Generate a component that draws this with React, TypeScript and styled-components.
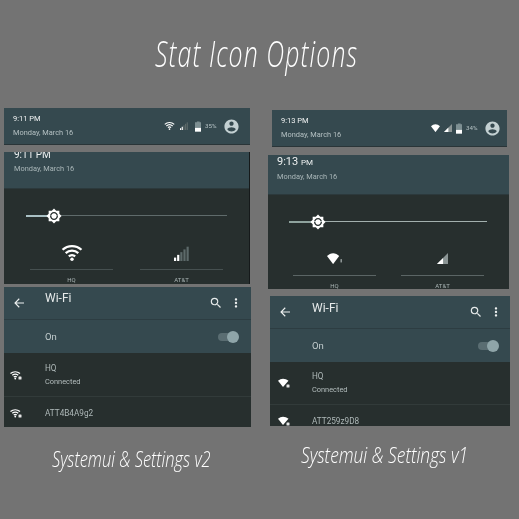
import React from 'react'
import styled, { createGlobalStyle } from 'styled-components'

const GlobalStyle = createGlobalStyle`
  html, body {
    margin: 0;
    padding: 0;
    background: #737373;
  }
  * {
    box-sizing: border-box;
  }
`

const Page = styled.div`
  width: 519px;
  height: 519px;
  overflow: hidden;
  background: #737373;
  font-family: Roboto, 'Liberation Sans', sans-serif;
  filter: blur(0.25px);
`

const Title = styled.h1`
  height: 100px;
  margin: 0;
  padding: 33px 0 0 155px;
  font-family: 'Open Sans', 'Liberation Sans', sans-serif;
  font-size: 36px;
  line-height: 42px;
  font-weight: 300;
  font-style: italic;
  letter-spacing: 1.6px;
  color: #fff;
  white-space: nowrap;

  span {
    display: inline-block;
    transform: scaleX(0.69);
    transform-origin: left center;
  }
`

const Columns = styled.div`
  display: flex;
`

const Column = styled.div`
  flex: 0 0 auto;
  width: ${p => (p.$first ? 264 : 255)}px;
  padding-left: 4px;
`

const StatusBar = styled.div`
  display: flex;
  align-items: center;
  justify-content: space-between;
  width: ${p => p.$width}px;
  height: 36px;
  margin: ${p => p.$top}px 0 0 ${p => p.$left}px;
  padding: 0 ${p => p.$padRight}px 0 9px;
  background: #35494f;
  box-shadow: 0 1px 0 #2a3538;
`

const Clock = styled.div`
  font-size: 7.5px;
  line-height: 10px;
  color: #f2f4f4;
`

const DateLine = styled.div`
  margin-top: 4px;
  font-size: 7.4px;
  line-height: 10px;
  color: #b4c0c2;
`

const StatusIcons = styled.div`
  display: flex;
  align-items: center;
  gap: 4px;
`

const StatusSlot = styled.div`
  margin-right: ${p => p.$after}px;
  line-height: 0;
`

const Percent = styled.span`
  margin-right: 2.5px;
  font-size: 6.2px;
  color: #b5c2c4;
`

const QuickPanel = styled.div`
  width: ${p => p.$width}px;
  height: ${p => p.$height}px;
  margin-top: ${p => p.$top}px;
  background: #272f2e;
  overflow: hidden;
  border-right: ${p => (p.$edge ? '1px solid #15191a' : '0')};
`

const PanelHeader = styled.div`
  height: ${p => p.$height}px;
  padding-left: ${p => p.$padLeft}px;
  overflow: hidden;
  background: #35494f;
  box-shadow: 0 1px 0 #2c393c;
`

const BigClock = styled.div`
  margin-top: ${p => p.$top}px;
  font-size: ${p => p.$size}px;
  line-height: 14px;
  color: #eef1f1;

  small {
    font-size: 8px;
  }
`

const PanelDate = styled.div`
  margin-top: 2px;
  font-size: 7.4px;
  line-height: 10px;
  color: #aab7b9;
`

const SliderTrack = styled.div`
  position: relative;
  width: ${p => p.$width}px;
  height: 1px;
  margin: ${p => p.$top}px 0 0 ${p => p.$left}px;
  background: ${p => p.$rest};
`

const SliderFill = styled.div`
  width: 24px;
  height: 2px;
  background: ${p => p.$color};
`

const SliderThumb = styled.div`
  position: absolute;
  left: ${p => p.$left}px;
  top: -7px;
  width: 16px;
  height: 16px;
  line-height: 0;
`

const Tiles = styled.div`
  display: flex;
  gap: ${p => p.$gap}px;
  margin: ${p => p.$top}px 0 0 ${p => p.$left}px;
`

const Tile = styled.div`
  width: 83px;
`

const TileIcon = styled.div`
  display: flex;
  justify-content: center;
  align-items: flex-end;
  height: 19px;
  line-height: 0;
`

const TileLine = styled.div`
  height: 1px;
  margin-top: ${p => p.$gap}px;
  background: ${p => p.$color};
`

const TileLabel = styled.div`
  margin-top: 6px;
  text-align: center;
  font-size: 6px;
  line-height: 8px;
  color: #a9b4b4;
`

const Settings = styled.div`
  width: ${p => p.$width}px;
  height: ${p => p.$height}px;
  margin: ${p => p.$top}px 0 0 ${p => p.$left}px;
  background: #272f2e;
  overflow: hidden;
`

const Toolbar = styled.div`
  display: flex;
  align-items: center;
  height: 33px;
  padding: 0 ${p => p.$padRight}px 0 10px;
  background: #35494f;
  border-bottom: 1px solid #2d3d42;
`

const ToolbarTitle = styled.div`
  flex: 1;
  margin: ${p => p.$lift}px 0 0 ${p => p.$gap}px;
  font-size: 12px;
  color: #e6eaea;
`

const ToolbarIcons = styled.div`
  display: flex;
  align-items: center;
  gap: 6px;
  line-height: 0;
`

const OnRow = styled.div`
  display: flex;
  align-items: center;
  justify-content: space-between;
  height: 33px;
  padding: 0 ${p => p.$padRight}px 0 ${p => p.$padLeft}px;
  background: #35494f;
  font-size: 9.5px;
  color: #c3cdce;
`

const Switch = styled.div`
  position: relative;
  width: 17px;
  height: 8px;
  border-radius: 4px;
  background: #5a6d72;

  &::after {
    content: '';
    position: absolute;
    right: -4px;
    top: -2px;
    width: 12px;
    height: 12px;
    border-radius: 50%;
    background: #8fa5a9;
  }
`

const NetworkRow = styled.div`
  display: flex;
  align-items: ${p => (p.$last ? 'flex-start' : 'center')};
  height: ${p => p.$height}px;
  padding: ${p => (p.$last ? '11px' : '0')} 0 0 ${p => p.$padLeft}px;
  border-bottom: ${p => (p.$last ? '0' : '1px solid #323b3a')};
`

const NetworkIcon = styled.div`
  width: ${p => p.$width}px;
  line-height: 0;
`

const NetworkName = styled.div`
  font-size: 8.2px;
  line-height: 11px;
  color: #aeb8b8;
`

const NetworkStatus = styled.div`
  margin-top: 3px;
  font-size: 7.4px;
  line-height: 10px;
  color: #b4bebe;
`

const Caption = styled.div`
  margin: ${p => p.$top}px 0 0 ${p => p.$left}px;
  font-family: 'Open Sans', 'Liberation Sans', sans-serif;
  font-size: 22px;
  line-height: 26px;
  font-weight: 300;
  font-style: italic;
  color: #fff;
  white-space: nowrap;
  transform: scaleX(${p => p.$squeeze});
  transform-origin: left center;
`

function WifiArcs({ size }: { size: number }) {
  return (
    <svg width={size} height={size * 0.82} viewBox="0 0 24 20" fill="none" stroke="#fff" strokeWidth="2.6">
      <path d="M1.5 7.5a15.5 15.5 0 0 1 21 0" />
      <path d="M5 11.2a10.5 10.5 0 0 1 14 0" />
      <path d="M8.5 14.8a5.2 5.2 0 0 1 7 0" />
      <circle cx="12" cy="18" r="1.9" fill="#fff" stroke="none" />
    </svg>
  )
}

function WifiFan({ size, mark }: { size: number; mark?: boolean }) {
  return (
    <svg width={size} height={size * 0.74} viewBox="0 0 27 20" fill="#fff">
      <path d="M11 20 0 5.5C3 2.5 7 .5 11 .5s8 2 11 5z" />
      {mark && <rect x="24.5" y="11" width="2" height="6" fill="#b8c0c0" />}
    </svg>
  )
}

function WifiLocked({ fan }: { fan?: boolean }) {
  return (
    <svg width="12" height="10" viewBox="0 0 24 20" fill="none" stroke="#fff" strokeWidth="2.6">
      {fan ? (
        <path d="M10 18 0 5.5C3 3 6.5 1.5 10 1.5S18 3 21 5.5z" fill="#fff" stroke="none" />
      ) : (
        <>
          <path d="M1 7a15 15 0 0 1 19 0" />
          <path d="M4.5 10.5a10 10 0 0 1 12 0" />
          <path d="M7.5 14a5 5 0 0 1 6 0" />
          <circle cx="10.5" cy="17" r="1.8" fill="#fff" stroke="none" />
        </>
      )}
      <rect x="17" y="13" width="6" height="6" rx="1" fill="#e6e6e6" stroke="none" />
    </svg>
  )
}

function SignalBars({ width, height }: { width: number; height: number }) {
  const bars = [5, 9, 13, 17, 21]
  return (
    <svg width={width} height={height} viewBox="0 0 22 22">
      {bars.map((h, i) => (
        <rect key={h} x={i * 4.6} y={22 - h} width="3.2" height={h} fill={i < 2 ? '#fff' : '#5d6a6a'} />
      ))}
    </svg>
  )
}

function SignalWedge({ size }: { size: number }) {
  return (
    <svg width={size} height={size} viewBox="0 0 20 20">
      <path d="M0 20 20 0v20z" fill="#8b9595" />
      <path d="M0 20 11 9v11z" fill="#fff" />
    </svg>
  )
}

function Battery() {
  return (
    <svg width="6.5" height="11" viewBox="0 0 7 11">
      <path d="M2 0h3v1h2v10H0V1h2z" fill="#7d8f92" />
      <rect y="7" width="7" height="4" fill="#fff" />
    </svg>
  )
}

function Account() {
  return (
    <svg width="17" height="17" viewBox="0 0 24 24" fill="#c3d0d2">
      <path d="M12 2C6.48 2 2 6.48 2 12s4.48 10 10 10 10-4.48 10-10S17.52 2 12 2zm0 3c1.66 0 3 1.34 3 3s-1.34 3-3 3-3-1.34-3-3 1.34-3 3-3zm0 14.2c-2.5 0-4.71-1.28-6-3.22.03-1.99 4-3.08 6-3.08 1.99 0 5.97 1.09 6 3.08-1.29 1.94-3.5 3.22-6 3.22z" />
    </svg>
  )
}

function BrightnessGear() {
  return (
    <svg width="16" height="16" viewBox="0 0 24 24" fill="#fff">
      <path d="M20 8.69V4h-4.69L12 .69 8.69 4H4v4.69L.69 12 4 15.31V20h4.69L12 23.31 15.31 20H20v-4.69L23.31 12 20 8.69zM12 18c-3.31 0-6-2.69-6-6s2.69-6 6-6 6 2.69 6 6-2.69 6-6 6zm0-10c-2.21 0-4 1.79-4 4s1.79 4 4 4 4-1.79 4-4-1.79-4-4-4z" />
    </svg>
  )
}

function BackArrow() {
  return (
    <svg width="10" height="10" viewBox="0 0 20 20" fill="none" stroke="#eef1f1" strokeWidth="2.2">
      <path d="M20 10H2M10.5 1.5 2 10l8.5 8.5" />
    </svg>
  )
}

function SearchIcon() {
  return (
    <svg width="14" height="14" viewBox="0 0 24 24" fill="#e6eaea">
      <path d="M15.5 14h-.79l-.28-.27A6.47 6.47 0 0 0 16 9.5 6.5 6.5 0 1 0 9.5 16c1.61 0 3.09-.59 4.23-1.57l.27.28v.79l5 4.99L20.49 19l-4.99-5zm-6 0C7.01 14 5 11.99 5 9.5S7.01 5 9.5 5 14 7.01 14 9.5 11.99 14 9.5 14z" />
    </svg>
  )
}

function MoreIcon() {
  return (
    <svg width="14" height="14" viewBox="0 0 24 24" fill="#eef1f1">
      <path d="M12 8c1.1 0 2-.9 2-2s-.9-2-2-2-2 .9-2 2 .9 2 2 2zm0 2c-1.1 0-2 .9-2 2s.9 2 2 2 2-.9 2-2-.9-2-2-2zm0 6c-1.1 0-2 .9-2 2s.9 2 2 2 2-.9 2-2-.9-2-2-2z" />
    </svg>
  )
}

export default function App() {
  return (
    <Page>
      <GlobalStyle />
      <Title>
        <span>Stat Icon Options</span>
      </Title>
      <Columns>
        <Column $first>
          <StatusBar $width={246} $top={8} $left={0} $padRight={10}>
            <div>
              <Clock>9:11 PM</Clock>
              <DateLine>Monday, March 16</DateLine>
            </div>
            <StatusIcons>
              <StatusSlot $after={0}>
                <WifiArcs size={11} />
              </StatusSlot>
              <StatusSlot $after={2}>
                <SignalBars width={10} height={8} />
              </StatusSlot>
              <Battery />
              <Percent>35%</Percent>
              <Account />
            </StatusIcons>
          </StatusBar>
          <QuickPanel $width={246} $height={132} $top={8} $edge>
            <PanelHeader $height={36} $padLeft={10}>
              <BigClock $size={10} $top={-4}>9:11 PM</BigClock>
              <PanelDate>Monday, March 16</PanelDate>
            </PanelHeader>
            <SliderTrack $width={201} $top={27} $left={22} $rest="#5f6b6b">
              <SliderFill $color="#a9c0c4" />
              <SliderThumb $left={20}>
                <BrightnessGear />
              </SliderThumb>
            </SliderTrack>
            <Tiles $gap={27} $top={26} $left={26}>
              <Tile>
                <TileIcon>
                  <WifiArcs size={22} />
                </TileIcon>
                <TileLine $gap={8} $color="#465050" />
                <TileLabel>HQ</TileLabel>
              </Tile>
              <Tile>
                <TileIcon>
                  <SignalBars width={15} height={15} />
                </TileIcon>
                <TileLine $gap={8} $color="#465050" />
                <TileLabel>AT&amp;T</TileLabel>
              </Tile>
            </Tiles>
          </QuickPanel>
          <Settings $width={247} $height={140} $top={3} $left={0}>
            <Toolbar $padRight={8}>
              <BackArrow />
              <ToolbarTitle $gap={21} $lift={-11}>Wi-Fi</ToolbarTitle>
              <ToolbarIcons>
                <SearchIcon />
                <MoreIcon />
              </ToolbarIcons>
            </Toolbar>
            <OnRow $padLeft={41} $padRight={16}>
              On
              <Switch />
            </OnRow>
            <NetworkRow $height={44} $padLeft={6}>
              <NetworkIcon $width={35}>
                <WifiLocked />
              </NetworkIcon>
              <div>
                <NetworkName>HQ</NetworkName>
                <NetworkStatus>Connected</NetworkStatus>
              </div>
            </NetworkRow>
            <NetworkRow $height={30} $padLeft={6} $last>
              <NetworkIcon $width={35}>
                <WifiLocked />
              </NetworkIcon>
              <NetworkName>ATT4B4A9g2</NetworkName>
            </NetworkRow>
          </Settings>
          <Caption $top={18} $left={48} $squeeze={0.75}>Systemui &amp; Settings v2</Caption>
        </Column>
        <Column>
          <StatusBar $width={235} $top={10} $left={4} $padRight={6}>
            <div>
              <Clock>9:13 PM</Clock>
              <DateLine>Monday, March 16</DateLine>
            </div>
            <StatusIcons>
              <StatusSlot $after={-2}>
                <WifiFan size={11} />
              </StatusSlot>
              <StatusSlot $after={0}>
                <SignalWedge size={8} />
              </StatusSlot>
              <Battery />
              <Percent>34%</Percent>
              <Account />
            </StatusIcons>
          </StatusBar>
          <QuickPanel $width={241} $height={134} $top={9}>
            <PanelHeader $height={39} $padLeft={9}>
              <BigClock $size={11} $top={0}>
                9:13 <small>PM</small>
              </BigClock>
              <PanelDate>Monday, March 16</PanelDate>
            </PanelHeader>
            <SliderTrack $width={198} $top={27} $left={21} $rest="#a3b0ae">
              <SliderFill $color="#8fa39e" />
              <SliderThumb $left={21}>
                <BrightnessGear />
              </SliderThumb>
            </SliderTrack>
            <Tiles $gap={25} $top={23} $left={25}>
              <Tile>
                <TileIcon>
                  <WifiFan size={15} mark />
                </TileIcon>
                <TileLine $gap={11} $color="#5b6565" />
                <TileLabel>HQ</TileLabel>
              </Tile>
              <Tile>
                <TileIcon>
                  <SignalWedge size={11} />
                </TileIcon>
                <TileLine $gap={11} $color="#5b6565" />
                <TileLabel>AT&amp;T</TileLabel>
              </Tile>
            </Tiles>
          </QuickPanel>
          <Settings $width={240} $height={130} $top={7} $left={2}>
            <Toolbar $padRight={7}>
              <BackArrow />
              <ToolbarTitle $gap={22} $lift={-8}>Wi-Fi</ToolbarTitle>
              <ToolbarIcons>
                <SearchIcon />
                <MoreIcon />
              </ToolbarIcons>
            </Toolbar>
            <OnRow $padLeft={42} $padRight={15}>
              On
              <Switch />
            </OnRow>
            <NetworkRow $height={43} $padLeft={8}>
              <NetworkIcon $width={34}>
                <WifiLocked fan />
              </NetworkIcon>
              <div>
                <NetworkName>HQ</NetworkName>
                <NetworkStatus>Connected</NetworkStatus>
              </div>
            </NetworkRow>
            <NetworkRow $height={21} $padLeft={8} $last>
              <NetworkIcon $width={34}>
                <WifiLocked fan />
              </NetworkIcon>
              <NetworkName>ATT259z9D8</NetworkName>
            </NetworkRow>
          </Settings>
          <Caption $top={15} $left={33} $squeeze={0.79}>Systemui &amp; Settings v1</Caption>
        </Column>
      </Columns>
    </Page>
  )
}
